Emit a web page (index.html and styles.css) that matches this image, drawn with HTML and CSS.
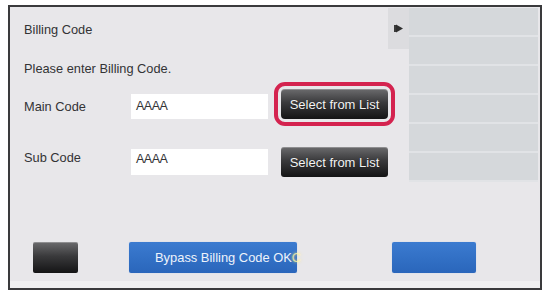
FILE: index.html
```html
<!DOCTYPE html>
<html lang="en">
<head>
<meta charset="utf-8">
<title>Billing Code</title>
<link rel="stylesheet" href="styles.css">
</head>
<body>
<div class="frame">
  <div class="top">
    <div class="form">
      <div class="title">Billing Code</div>
      <div class="prompt">Please enter Billing Code.</div>
      <div class="row row-main">
        <div class="label">Main Code</div>
        <div class="input">AAAA</div>
        <button class="btn-dark btn-select highlight">Select from List</button>
      </div>
      <div class="row row-sub">
        <div class="label label-sub">Sub Code</div>
        <div class="input input-sub">AAAA</div>
        <button class="btn-dark btn-select">Select from List</button>
      </div>
    </div>
    <div class="tab">
      <svg class="tab-icon" width="9" height="9" viewBox="0 0 9 9"><rect x="0" y="1" width="2" height="7" fill="#3a3a3a"/><polygon points="2,0.5 9,4.5 2,8.5" fill="#2e2e2e"/></svg>
    </div>
    <div class="panel">
      <div class="panel-row"></div>
      <div class="panel-row"></div>
      <div class="panel-row"></div>
      <div class="panel-row"></div>
      <div class="panel-row"></div>
      <div class="panel-row"></div>
    </div>
  </div>
  <div class="bottom">
    <button class="btn-dark btn-small"></button>
    <button class="btn-blue btn-bypass">Bypass Billing Code OK<span class="glow">C</span></button>
    <button class="btn-blue btn-right"></button>
  </div>
  <div class="strip"></div>
</div>
</body>
</html>
```

FILE: styles.css
```css
html, body {
  margin: 0;
  background: #ffffff;
}
body {
  padding: 5px 3px 2px 8px;
  font-family: "Liberation Sans", Arial, sans-serif;
  color: #333335;
}
.frame {
  box-sizing: border-box;
  width: 534px;
  height: 285px;
  border: 2px solid #3a3a3c;
  background: #e8e7ea;
  display: flex;
  flex-direction: column;
}
.top {
  display: flex;
  height: 175px;
}
.form {
  flex: 1;
  padding-left: 14px;
  font-size: 12.8px;
}
.title {
  height: 46px;
  line-height: 46px;
}
.prompt {
  height: 32px;
  line-height: 32px;
}
.row {
  display: flex;
  height: 30px;
}
.row-main {
  margin-top: 4px;
  align-items: flex-end;
}
.row-sub {
  margin-top: 28px;
  align-items: center;
}
.label {
  width: 107px;
  line-height: 25px;
}
.label-sub {
  align-self: flex-start;
  line-height: 22px;
}
.input {
  box-sizing: border-box;
  width: 137px;
  height: 25px;
  background: #ffffff;
  padding-left: 5px;
  line-height: 25px;
  font-size: 12.5px;
  letter-spacing: -0.5px;
}
.input-sub {
  height: 26px;
  line-height: 20px;
}
button {
  font-family: "Liberation Sans", Arial, sans-serif;
  border: none;
  padding: 0;
  margin: 0;
  cursor: pointer;
}
.btn-dark {
  background: linear-gradient(#6b6b6d 0%, #3a3a3c 45%, #141415 100%);
  color: #f4f4f4;
  border-radius: 3px;
  box-shadow: inset 0 1px 0 rgba(255,255,255,0.25);
}
.btn-select {
  width: 107px;
  height: 30px;
  margin-left: 13px;
  font-size: 13px;
  text-shadow: 0 0 1px rgba(0,0,0,0.6);
}
.highlight {
  outline: 4px solid #d4234f;
  outline-offset: 3px;
  border-radius: 4px;
}
.tab {
  width: 21px;
  height: 41px;
  margin-top: 1px;
  background: #dcdcdf;
  display: flex;
  justify-content: center;
  padding-top: 16px;
  box-sizing: border-box;
}
.tab-icon {
  display: block;
}
.panel {
  width: 130px;
  margin: 1px 2px 0 0;
  display: flex;
  flex-direction: column;
  background: #d5d8db;
}
.panel-row {
  height: 29px;
  box-sizing: border-box;
  border-bottom: 2px solid #e1e3e6;
}
.bottom {
  display: flex;
  padding-top: 60px;
}
.btn-small {
  width: 45px;
  height: 31px;
  margin-left: 23px;
  border-radius: 2px;
}
.btn-blue {
  height: 31px;
  background: linear-gradient(#3b7bd0, #2a66bb);
  color: #eef3fb;
  border-radius: 2px;
  box-shadow: 0 0 1px #9fc0ec;
}
.btn-bypass {
  width: 168px;
  margin-left: 51px;
  text-align: left;
  padding-left: 26px;
  font-size: 12.9px;
  white-space: nowrap;
  overflow: visible;
}
.glow {
  color: rgba(255, 246, 170, 0.75);
  text-shadow: 0 0 3px rgba(255, 240, 120, 0.9);
}
.btn-right {
  width: 84px;
  margin-left: 95px;
}
.strip {
  margin-top: auto;
  height: 7px;
  background: #f0f0f1;
}
```
